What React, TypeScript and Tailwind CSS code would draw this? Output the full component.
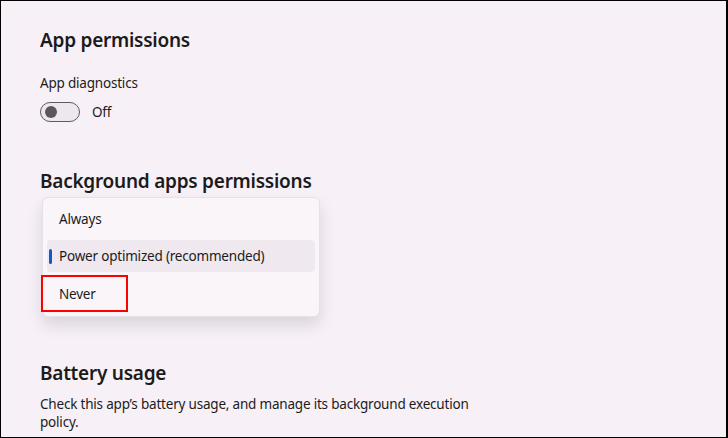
export default function App() {
  return (
    <div
      className="w-[728px] h-[438px] overflow-hidden bg-[#f7f1f7] border-l border-t border-b border-r-2 border-black text-[#1b1b1b] relative"
      style={{ fontFamily: '"Noto Sans", "Open Sans", sans-serif' }}
    >
      <div className="pl-[39px] pt-[25px] flex flex-col">
        <div className="text-[19px] leading-[28px] font-semibold tracking-[-0.25px]">App permissions</div>
        <div className="mt-[19px] text-[13.5px] leading-[20px] tracking-[-0.2px]">App diagnostics</div>
        <div className="mt-[9px] flex items-center gap-[12px]">
          <div className="w-[40px] h-[20px] rounded-full border border-[#5f5b5f] bg-[#ede8ed] flex items-center pl-[4px]">
            <div className="w-[12px] h-[12px] rounded-full bg-[#5a565a]" />
          </div>
          <span className="text-[13.5px] leading-[20px] tracking-[-0.2px]">Off</span>
        </div>
        <div className="mt-[45px] text-[19px] leading-[28px] font-semibold tracking-[-0.25px]">Background apps permissions</div>
        <div className="h-[164px]" />
        <div className="text-[19px] leading-[28px] font-semibold tracking-[-0.25px]">Battery usage</div>
        <div className="mt-[8px] w-[450px] text-[13.5px] leading-[18px] tracking-[-0.2px]">
          Check this app’s battery usage, and manage its background execution policy.
        </div>
      </div>

      <div className="absolute left-[41px] top-[196px] w-[278px] h-[120px] bg-[#f9f5f9] border border-[#e6e1e6] rounded-[6px] shadow-[0_8px_16px_rgba(0,0,0,0.12)] flex flex-col px-[4px] text-[13.5px] tracking-[-0.2px]">
        <div className="h-[42px] flex items-center pl-[12px]">Always</div>
        <div className="h-[32px] flex items-center rounded-[4px] bg-[#efe9ef] relative pl-[12px]">
          <div className="absolute left-[2px] top-[9px] w-[3px] h-[15px] rounded-full bg-[#0b5cc5]" />
          Power optimized (recommended)
        </div>
        <div className="h-[44px] flex items-center pl-[12px]">Never</div>
      </div>
      <div className="absolute left-[40px] top-[274px] w-[87px] h-[37px] border-2 border-[#ff0000]" />
    </div>
  );
}
